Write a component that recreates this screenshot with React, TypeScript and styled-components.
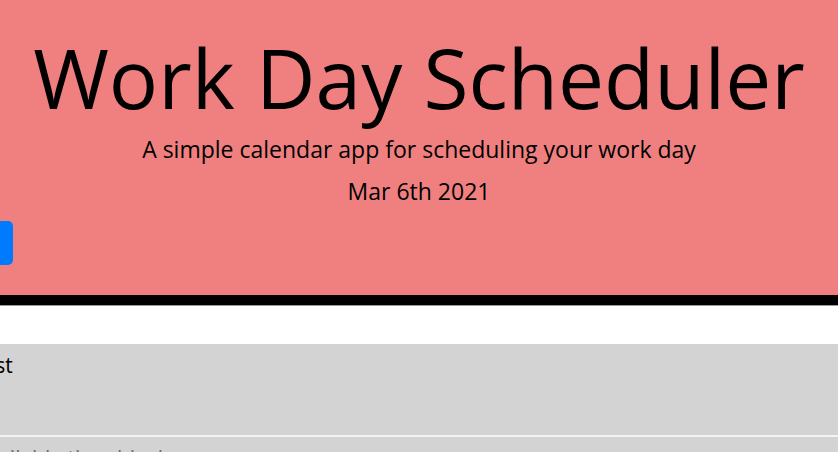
import React from "react";
import styled, { createGlobalStyle } from "styled-components";

const Global = createGlobalStyle`
  html, body { margin: 0; padding: 0; background: #ffffff; overflow: hidden; }
  body { font-family: "Open Sans", "Liberation Sans", sans-serif; color: #000; }
`;

const Header = styled.header`
  background: #f08080;
  border-bottom: 10px solid #000;
  box-shadow: 0 1px 0 #9a9a9a;
  text-align: center;
  padding-top: 28px;
  height: 267px;
  box-sizing: content-box;
`;

const Title = styled.h1`
  margin: 0 0 6px;
  font-size: 82px;
  font-weight: 400;
  line-height: 1.2;
`;

const Lead = styled.p`
  margin: 0;
  font-size: 23px;
  font-weight: 400;
  line-height: 1.5;
`;

const DateLine = styled(Lead)`
  margin-top: 7px;
`;

const ButtonRow = styled.div`
  display: flex;
  margin-top: 13px;
`;

const SaveButton = styled.button`
  width: 50px;
  height: 44px;
  margin-left: -37px;
  border: none;
  border-radius: 5px;
  background: #007bff;
`;

const Rows = styled.main`
  margin-top: 39px;
  display: flex;
  flex-direction: column;
  gap: 2px;
  background: #f4f4f4;
`;

const Row = styled.div`
  background: #d3d3d3;
  height: 91px;
  overflow: hidden;
`;

const Entry = styled.div<{ $placeholder?: boolean }>`
  margin-left: -24px;
  padding-top: 6px;
  font-size: 21px;
  line-height: 1.5;
  color: ${(p) => (p.$placeholder ? "#6c6c6c" : "#000")};
  text-align: left;
  white-space: nowrap;
`;

export default function App() {
  return (
    <>
      <Global />
      <Header>
        <Title>Work Day Scheduler</Title>
        <Lead>A simple calendar app for scheduling your work day</Lead>
        <DateLine>Mar 6th 2021</DateLine>
        <ButtonRow>
          <SaveButton aria-label="save" />
        </ButtonRow>
      </Header>
      <Rows>
        <Row>
          <Entry>test</Entry>
        </Row>
        <Row>
          <Entry $placeholder>available time block</Entry>
        </Row>
      </Rows>
    </>
  );
}
